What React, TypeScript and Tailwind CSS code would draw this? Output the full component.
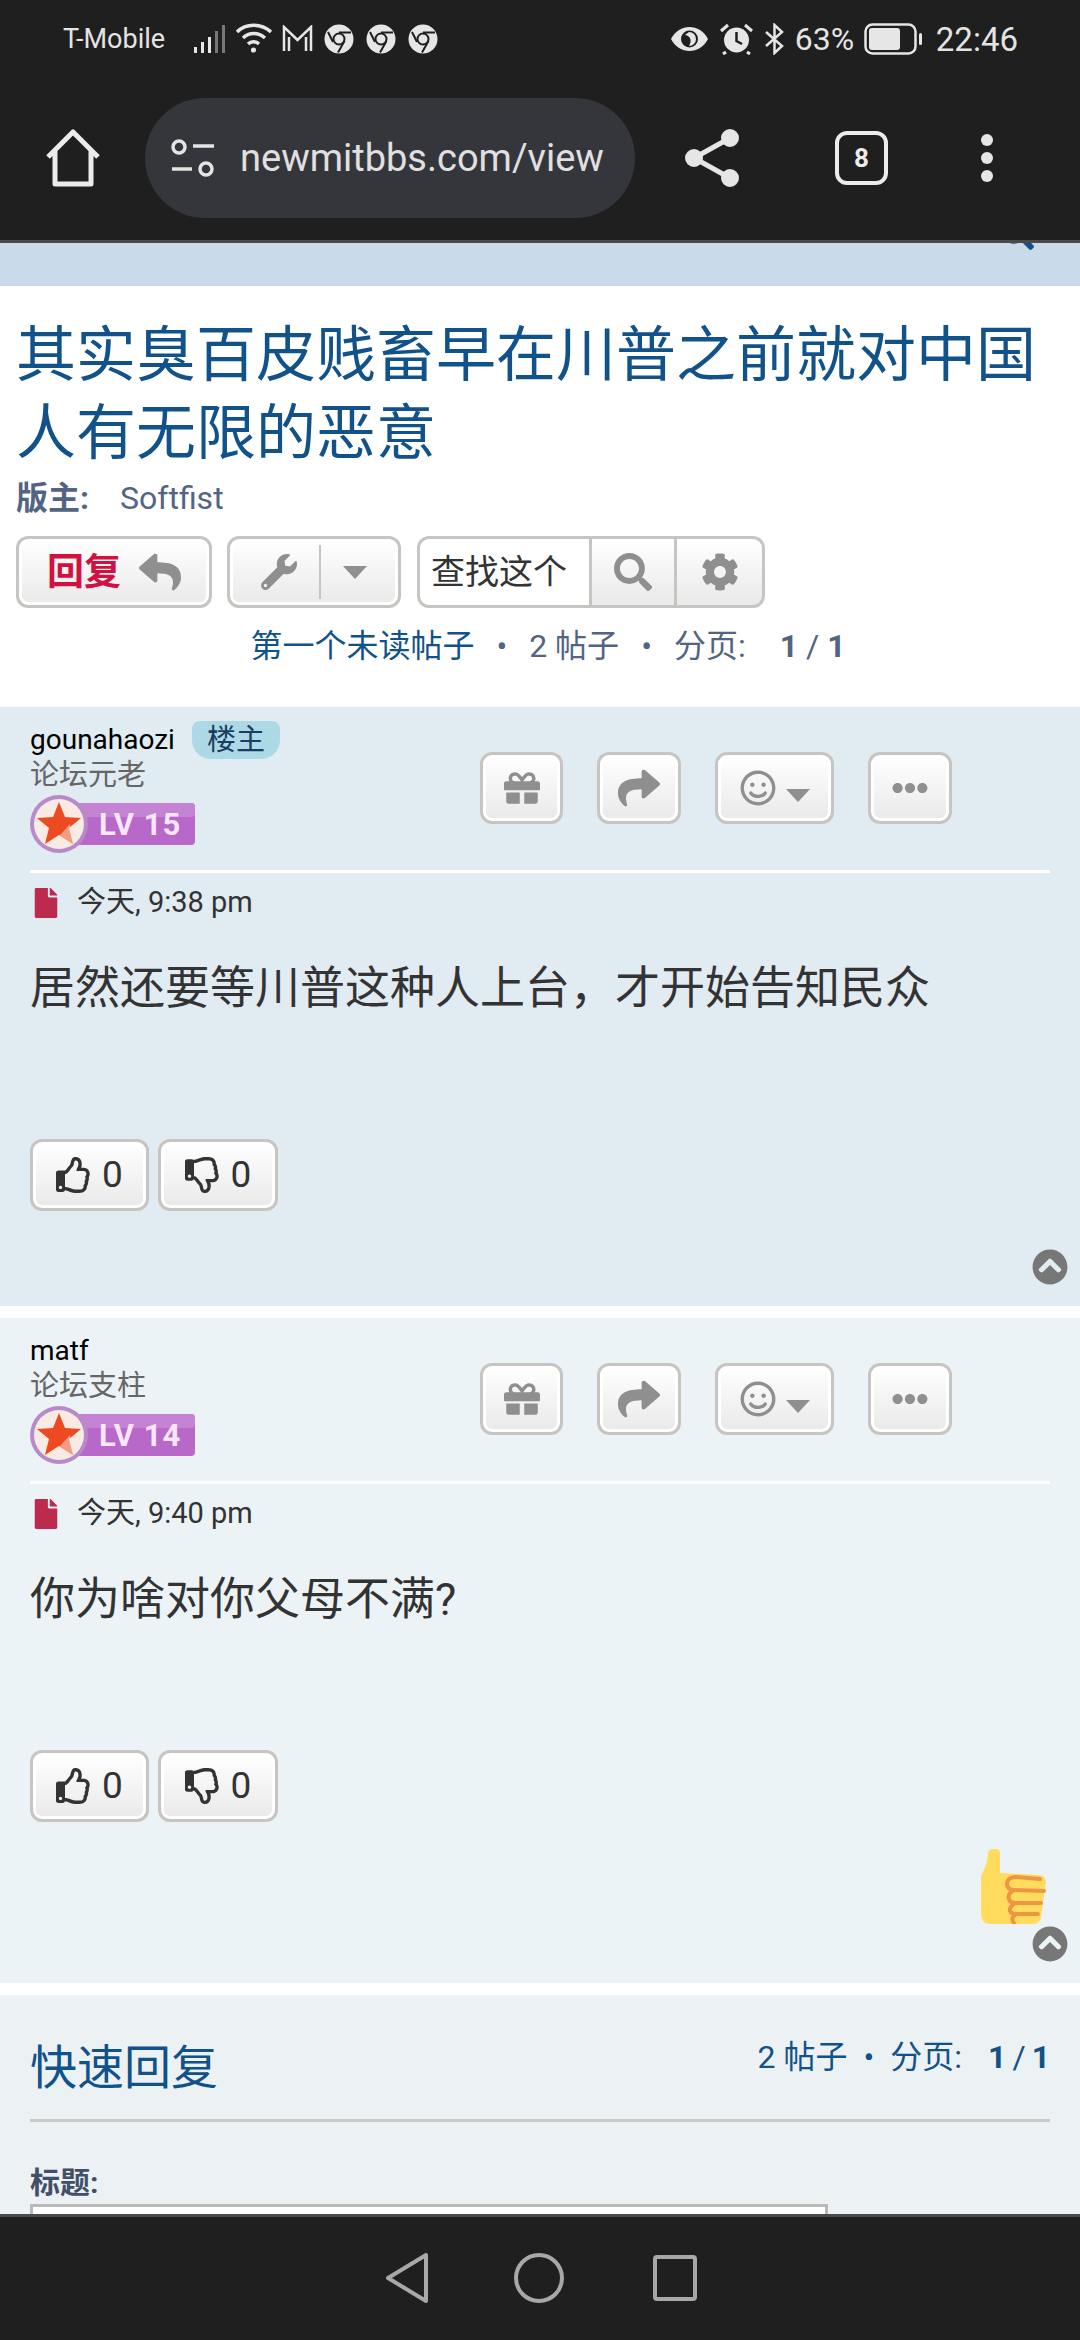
import type { ReactNode } from 'react';
import {
  FaChevronCircleUp,
  FaCog,
  FaEllipsisH,
  FaFile,
  FaGift,
  FaRegSmile,
  FaRegThumbsDown,
  FaRegThumbsUp,
  FaReply,
  FaSearch,
  FaShare,
  FaWrench,
} from 'react-icons/fa';

const posts = [
  { user: 'gounahaozi', op: true, rank: '论坛元老', level: '15', time: '今天, 9:38 pm', text: '居然还要等川普这种人上台，才开始告知民众' },
  { user: 'matf', op: false, rank: '论坛支柱', level: '14', time: '今天, 9:40 pm', text: '你为啥对你父母不满?' },
];

function ChromeIcon() {
  return (
    <svg width="30" height="30" viewBox="0 0 30 30">
      <circle cx="15" cy="15" r="14.5" fill="#e6e6e6" />
      <circle cx="15" cy="15" r="5.5" fill="#e6e6e6" stroke="#1f1f1f" strokeWidth="2" />
      <path d="M15 8.5 L27 8.5 M9 18 L4 8 M20.5 17 L14 28.5" stroke="#1f1f1f" strokeWidth="2" fill="none" />
    </svg>
  );
}

function StatusBar() {
  return (
    <div className="flex h-[76px] items-center justify-between pl-[63px] pr-[62px] pt-[2px] text-[#e4e4e4]">
      <div className="flex items-center">
        <span className="w-[131px] text-[27px] leading-none">T-Mobile</span>
        <svg width="32" height="30" viewBox="0 0 32 30" className="mr-[9px]">
          <rect x="0" y="23" width="3" height="6" fill="#e6e6e6" />
          <rect x="7" y="18" width="3" height="11" fill="#e6e6e6" />
          <rect x="14" y="13" width="3" height="16" fill="#e6e6e6" />
          <rect x="21" y="7" width="3" height="22" fill="#777" />
          <rect x="28" y="1" width="3" height="28" fill="#777" />
        </svg>
        <svg width="39" height="32" viewBox="0 0 39 32" fill="none" stroke="#e6e6e6" strokeWidth="3.5" className="mr-[8px]">
          <path d="M2 9 C11 0 26 0 36 9" />
          <path d="M8 15 C14 9 23 9 30 15" />
          <path d="M13 21 C16 18 21 18 24 21" />
          <circle cx="18.5" cy="27" r="2.6" fill="#e6e6e6" stroke="none" />
        </svg>
        <svg width="31" height="28" viewBox="0 0 31 28" fill="none" stroke="#e6e6e6" strokeWidth="2.5" className="mr-[11px]">
          <path d="M2 26 V2 L15.5 15 L29 2 V26 M7 26 V12 M24 26 V12" />
        </svg>
        <div className="flex gap-[12px]">
          <ChromeIcon />
          <ChromeIcon />
          <ChromeIcon />
        </div>
      </div>
      <div className="flex items-center">
        <svg width="39" height="28" viewBox="0 0 39 28" className="mr-[10px]">
          <path d="M1 14 C9 -2 30 -2 38 14 C30 30 9 30 1 14 Z" fill="#e6e6e6" />
          <circle cx="19.5" cy="14" r="8.5" fill="#1f1f1f" />
          <path d="M19 7 A7 7 0 0 1 19 21 C22 16 21 11 15 10 Z" fill="#e6e6e6" />
        </svg>
        <svg width="35" height="32" viewBox="0 0 35 32" className="mr-[10px]">
          <circle cx="17.5" cy="17" r="12.5" fill="#e6e6e6" />
          <path d="M17.5 9 V18 L23 21" stroke="#1f1f1f" strokeWidth="2.5" fill="none" />
          <path d="M2 8 L9 2 M33 8 L26 2 M7 29 L4 31 M28 29 L31 31" stroke="#e6e6e6" strokeWidth="3" />
        </svg>
        <svg width="21" height="32" viewBox="0 0 21 32" fill="none" stroke="#e6e6e6" strokeWidth="2.5" className="mr-[10px]">
          <path d="M2 9 L18 23 L10.5 30 V2 L18 9 L2 23" />
        </svg>
        <span className="w-[69px] text-[32px] leading-none">63%</span>
        <svg width="60" height="32" viewBox="0 0 60 32" className="mr-[12px]">
          <rect x="1.5" y="1.5" width="50" height="29" rx="7" fill="none" stroke="#e6e6e6" strokeWidth="2.5" />
          <rect x="5" y="5" width="31" height="22" rx="3" fill="#e6e6e6" />
          <rect x="55" y="10" width="3" height="12" rx="1.5" fill="#e6e6e6" />
        </svg>
        <span className="text-[33px] leading-none">22:46</span>
      </div>
    </div>
  );
}

function Toolbar() {
  return (
    <div className="relative flex h-[167px] items-start border-b-[3px] border-[#4a4a4a] pt-[22px]">
      <div className="flex h-[120px] w-[145px] items-center justify-center">
        <svg width="56" height="58" viewBox="0 0 56 58" fill="none" stroke="#ececec" strokeWidth="5" strokeLinejoin="round">
          <path d="M3 28 L28 3 L53 28 M10 22 V55 H46 V22" />
        </svg>
      </div>
      <div className="flex h-[120px] w-[490px] items-center overflow-hidden rounded-full bg-[#34363b] pl-[25px]">
        <svg width="46" height="40" viewBox="0 0 46 40" fill="none" stroke="#e4e4e4" strokeWidth="3.5" className="shrink-0">
          <circle cx="9" cy="9" r="6" />
          <path d="M23 8 H44 M2 31 H22" />
          <circle cx="36" cy="31" r="6" />
        </svg>
        <span className="ml-[24px] w-[372px] shrink-0 overflow-hidden whitespace-nowrap text-[38px] leading-none text-[#e0e0e0]">newmitbbs.com/view</span>
      </div>
      <div className="flex h-[120px] w-[105px] items-center justify-end">
        <svg width="56" height="60" viewBox="0 0 56 60" fill="#e6e6e6" stroke="#e6e6e6" strokeWidth="5">
          <path d="M46 10 L10 30 L46 50" fill="none" />
          <circle cx="46" cy="10" r="6.5" />
          <circle cx="10" cy="30" r="6.5" />
          <circle cx="46" cy="50" r="6.5" />
        </svg>
      </div>
      <div className="flex h-[120px] w-[148px] items-center justify-end">
        <div className="flex h-[54px] w-[53px] items-center justify-center rounded-[12px] border-[4px] border-[#ececec] text-[26px] font-bold leading-none text-[#ececec]">8</div>
      </div>
      <div className="flex h-[120px] flex-1 flex-col items-center justify-center gap-[6px] pl-[5px]">
        <span className="size-[12px] rounded-full bg-[#e6e6e6]" />
        <span className="size-[12px] rounded-full bg-[#e6e6e6]" />
        <span className="size-[12px] rounded-full bg-[#e6e6e6]" />
      </div>
    </div>
  );
}

function Btn({ className, children }: { className: string; children: ReactNode }) {
  return (
    <div className={`flex h-[72px] shrink-0 items-center justify-center rounded-[12px] border-[3px] border-[#c7c5c1] bg-linear-to-b from-white to-[#e9e9e9] shadow-[inset_0_0_0_3px_#ffffff] ${className}`}>
      {children}
    </div>
  );
}

function Caret() {
  return <span className="size-0 border-x-[12px] border-t-[13px] border-x-transparent border-t-[#8f8f8f]" />;
}

function LevelBadge({ level }: { level: string }) {
  return (
    <svg width="166" height="60" viewBox="0 0 166 60" className="block">
      <rect x="30" y="9" width="135" height="42" rx="4" fill="#b868c8" />
      <rect x="30" y="9" width="135" height="14" rx="4" fill="#c583d3" />
      <circle cx="29" cy="30" r="29" fill="#b98acb" />
      <circle cx="29" cy="30" r="25" fill="#f7ebe4" />
      <path d="M29 8 L35 23 L51 24 L39 34 L43 50 L29 41 L15 50 L19 34 L7 24 L23 23 Z" fill="#ee4a22" />
      <path d="M40 30 L22 50 L29 41 L43 50 Z" fill="#f7ebe4" opacity="0.5" />
      <text x="69" y="41" fontFamily="Roboto, sans-serif" fontSize="31" fontWeight="700" fill="#f6e6fa" letterSpacing="1">
        LV {level}
      </text>
    </svg>
  );
}

function ThumbEmoji() {
  return (
    <svg width="65" height="75" viewBox="0 0 65 75" className="absolute right-[34px] top-[531px]">
      <path d="M7 4 Q8 0 12 0 H15 Q19 0 19 5 V24 L58 26 Q65 27 65 33 L60 68 Q59 75 52 75 H10 Q0 75 0 65 V27 Q7 14 7 4 Z" fill="#ffdc5d" />
      <path
        d="M59 30 L34 28 Q25 29 26 36 Q27 41 33 41 L63 42 M33 41 Q26 45 28 50 Q29 54 34 54 L60 54 M34 54 Q28 58 29 62 Q30 65 35 65 L57 65 M35 65 Q29 69 33 74"
        fill="none"
        stroke="#ef9645"
        strokeWidth="4"
        strokeLinecap="round"
      />
    </svg>
  );
}

function Post({ post, index }: { post: (typeof posts)[number]; index: number }) {
  return (
    <div className={index === 0 ? 'relative h-[599px] bg-[#e1ebf2] px-[30px] pt-[15px]' : 'relative mt-[12px] h-[665px] bg-[#ecf3f7] px-[30px] pt-[15px]'}>
      <div className="flex items-start">
        <div className="w-[450px]">
          <div className="flex h-[36px] items-center text-[28px] text-black">
            <span>{post.user}</span>
            {post.op && (
              <span className="ml-[17px] flex h-[38px] w-[88px] items-center justify-center rounded-b-[19px] rounded-t-[8px] bg-[#add8e6] text-[29px] leading-none text-[#1a3d63]">楼主</span>
            )}
          </div>
          <div className="flex h-[36px] items-center text-[29px] text-[#666666]">{post.rank}</div>
          <LevelBadge level={post.level} />
        </div>
        <div className="mt-[30px] flex gap-[34px]">
          <Btn className="w-[83px]">
            <FaGift className="size-[36px] text-[#8f8f8f]" />
          </Btn>
          <Btn className="w-[84px]">
            <FaShare className="size-[42px] text-[#8f8f8f]" />
          </Btn>
          <Btn className="w-[119px] gap-[10px]">
            <FaRegSmile className="size-[36px] text-[#8f8f8f]" />
            <span className="mt-[14px] flex">
              <Caret />
            </span>
          </Btn>
          <Btn className="w-[84px]">
            <FaEllipsisH className="size-[36px] text-[#8f8f8f]" />
          </Btn>
        </div>
      </div>
      <div className="mt-[16px] h-[3px] bg-white" />
      <div className="mt-[15px] flex h-[30px] items-center text-[30px] text-[#333333]">
        <FaFile className="ml-[3px] h-[30px] w-[26px] text-[#bc2a4d]" />
        <span className="ml-[18px] text-[29px]">{post.time}</span>
      </div>
      <div className="mt-[41px] h-[60px] text-[45px] leading-[60px] text-[#333333]">{post.text}</div>
      <div className="mt-[120px] flex gap-[9px]">
        <Btn className="w-[119px] gap-[10px] text-[37px] text-[#333333]">
          <FaRegThumbsUp className="size-[36px]" />
          <span>0</span>
        </Btn>
        <Btn className="w-[120px] gap-[10px] text-[37px] text-[#333333]">
          <FaRegThumbsDown className="size-[36px]" />
          <span>0</span>
        </Btn>
      </div>
      {index === 1 && <ThumbEmoji />}
      <FaChevronCircleUp className="absolute bottom-[21px] right-[12px] size-[36px] text-[#777777]" />
    </div>
  );
}

export default function App() {
  return (
    <div className="flex h-[2340px] w-[1080px] flex-col overflow-hidden bg-white [font-family:Roboto,'Noto_Sans_CJK_SC',sans-serif]">
      <div className="bg-[#1f1f1f]">
        <StatusBar />
        <Toolbar />
      </div>
      <div className="min-h-0 flex-1 overflow-hidden">
        <div className="relative h-[43px] overflow-hidden bg-[#c9daea]">
          <FaSearch className="absolute -top-[27px] right-[46px] size-[34px] text-[#105289]" />
        </div>
        <div className="h-[421px] px-[16px] pt-[31px]">
          <h1 className="text-[60px] font-normal leading-[78px] text-[#105289]">其实臭百皮贱畜早在川普之前就对中国人有无限的恶意</h1>
          <div className="mt-[5px] flex h-[40px] items-center text-[32px] text-[#536482]">
            <b>版主:</b>
            <span className="ml-[31px]">Softfist</span>
          </div>
          <div className="mt-[18px] flex">
            <Btn className="w-[196px]">
              <span className="text-[37px] font-bold leading-none text-[#d31141]">回复</span>
              <FaReply className="ml-[18px] size-[42px] text-[#8f8f8f]" />
            </Btn>
            <Btn className="ml-[15px] w-[174px]">
              <FaWrench className="size-[36px] text-[#8f8f8f]" />
              <span className="mx-[22px] h-[54px] w-[2px] bg-[#c7c5c1]" />
              <Caret />
            </Btn>
            <div className="ml-[16px] flex h-[72px] w-[348px]">
              <div className="flex w-[172px] items-center rounded-l-[12px] border-y-[3px] border-l-[3px] border-[#c7c5c1] bg-white pl-[11px] text-[34px] text-[#333333]">查找这个</div>
              <div className="flex w-[88px] items-center justify-center border-[3px] border-[#c7c5c1] bg-linear-to-b from-white to-[#e9e9e9]">
                <FaSearch className="size-[38px] text-[#8f8f8f]" />
              </div>
              <div className="flex w-[88px] items-center justify-center rounded-r-[12px] border-y-[3px] border-r-[3px] border-[#c7c5c1] bg-linear-to-b from-white to-[#e9e9e9]">
                <FaCog className="size-[38px] text-[#8f8f8f]" />
              </div>
            </div>
          </div>
          <div className="mt-[17px] flex h-[42px] items-center justify-center pl-[16px] text-[32px] text-[#536482]">
            <span className="text-[#105289]">第一个未读帖子</span>
            <span className="mx-[22px]">•</span>
            <span>2 帖子</span>
            <span className="mx-[22px]">•</span>
            <span>分页:</span>
            <b className="ml-[34px]">1</b>
            <span className="mx-[8px]">/</span>
            <b>1</b>
          </div>
        </div>
        {posts.map((post, index) => (
          <Post post={post} index={index} key={post.user} />
        ))}
        <div className="mt-[12px] h-[300px] bg-[#ecf1f4] px-[30px] pt-[37px]">
          <div className="flex h-[90px] items-start justify-between border-b-[3px] border-[#c9c9c9]">
            <span className="mt-[6px] text-[47px] leading-[60px] text-[#105289]">快速回复</span>
            <div className="flex h-[50px] items-center text-[32px] text-[#105289]">
              <span>2 帖子</span>
              <span className="mx-[16px]">•</span>
              <span>分页:</span>
              <b className="ml-[26px]">1</b>
              <span className="mx-[6px]">/</span>
              <b>1</b>
            </div>
          </div>
          <div className="mt-[40px] h-[42px] text-[30px] font-bold leading-[42px] text-[#425067]">标题:</div>
          <div className="h-[60px] w-[798px] border-[3px] border-[#b9b9b9] bg-white" />
        </div>
      </div>
      <div className="flex h-[126px] shrink-0 items-center justify-center gap-[0px] border-t-[3px] border-[#4a4a4a] bg-[#1f1f1f] pb-[2px]">
        <svg width="46" height="52" viewBox="0 0 46 52" fill="none" stroke="#a8a8a8" strokeWidth="4" strokeLinejoin="round" className="mr-[84px]">
          <path d="M42 3 V49 L4 26 Z" />
        </svg>
        <svg width="50" height="50" viewBox="0 0 50 50" fill="none" stroke="#a8a8a8" strokeWidth="4" className="mr-[89px]">
          <circle cx="25" cy="25" r="23" />
        </svg>
        <svg width="44" height="46" viewBox="0 0 44 46" fill="none" stroke="#a8a8a8" strokeWidth="4" strokeLinejoin="round">
          <rect x="2" y="2" width="40" height="42" rx="2" />
        </svg>
      </div>
    </div>
  );
}
